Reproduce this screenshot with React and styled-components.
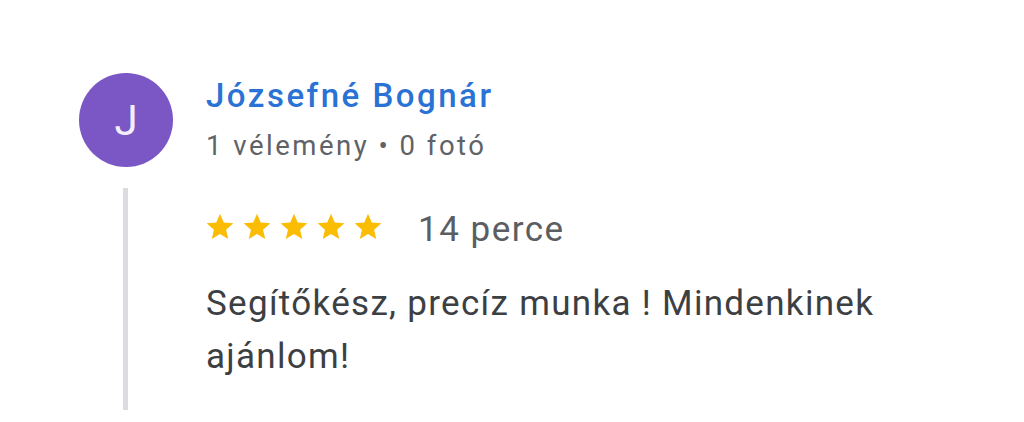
import styled, { createGlobalStyle } from "styled-components";

const GlobalStyle = createGlobalStyle`
  body {
    margin: 0;
    background: #fff;
    font-family: Roboto, "Noto Sans", sans-serif;
  }
`;

const Star = () => (
  <svg width="32" height="32" viewBox="0 0 24 24">
    <path
      fill="#fbbc04"
      d="M12 17.27L18.18 21l-1.64-7.03L22 9.24l-7.19-.61L12 2 9.19 8.63 2 9.24l5.46 4.73L5.82 21z"
    />
  </svg>
);

const App = () => {
  return (
    <>
      <GlobalStyle />
      <Review>
        <Header>
          <Avatar>J</Avatar>
          <Author>
            <Name>Józsefné Bognár</Name>
            <Meta>1 vélemény • 0 fotó</Meta>
          </Author>
        </Header>
        <Body>
          <RatingRow>
            <Stars>
              {[0, 1, 2, 3, 4].map(i => (
                <Star key={i} />
              ))}
            </Stars>
            <Time>14 perce</Time>
          </RatingRow>
          <Text>Segítőkész, precíz munka ! Mindenkinek ajánlom!</Text>
        </Body>
      </Review>
    </>
  );
};

export default App;

const Review = styled.div`
  padding: 73px 0 0 79px;
`;

const Header = styled.div`
  display: flex;
  align-items: center;
  gap: 33px;
`;

const Avatar = styled.div`
  width: 94px;
  height: 94px;
  border-radius: 50%;
  background: #7b57c5;
  color: #f3eefb;
  display: flex;
  align-items: center;
  justify-content: center;
  font-size: 42px;
  font-weight: 400;
`;

const Author = styled.div`
  display: flex;
  flex-direction: column;
  gap: 16px;
`;

const Name = styled.div`
  color: #2a72d4;
  font-size: 33px;
  font-weight: 500;
  line-height: 36px;
  letter-spacing: 2.5px;
`;

const Meta = styled.div`
  color: #5f6368;
  font-size: 27.5px;
  line-height: 32px;
  letter-spacing: 2.5px;
`;

const Body = styled.div`
  margin: 21px 0 0 44px;
  padding: 22px 0 27px 78px;
  border-left: 5px solid #dadce0;
  width: 700px;
`;

const RatingRow = styled.div`
  display: flex;
  align-items: flex-start;
  gap: 34px;
`;

const Stars = styled.div`
  display: flex;
  gap: 5px;
  margin: 1px 0 0 -2px;
`;

const Time = styled.span`
  color: #5a5e62;
  font-size: 35px;
  line-height: 40px;
  letter-spacing: 1.5px;
`;

const Text = styled.p`
  margin: 27px 0 0;
  color: #3c4043;
  font-size: 35px;
  line-height: 53px;
  letter-spacing: 1.3px;
`;
